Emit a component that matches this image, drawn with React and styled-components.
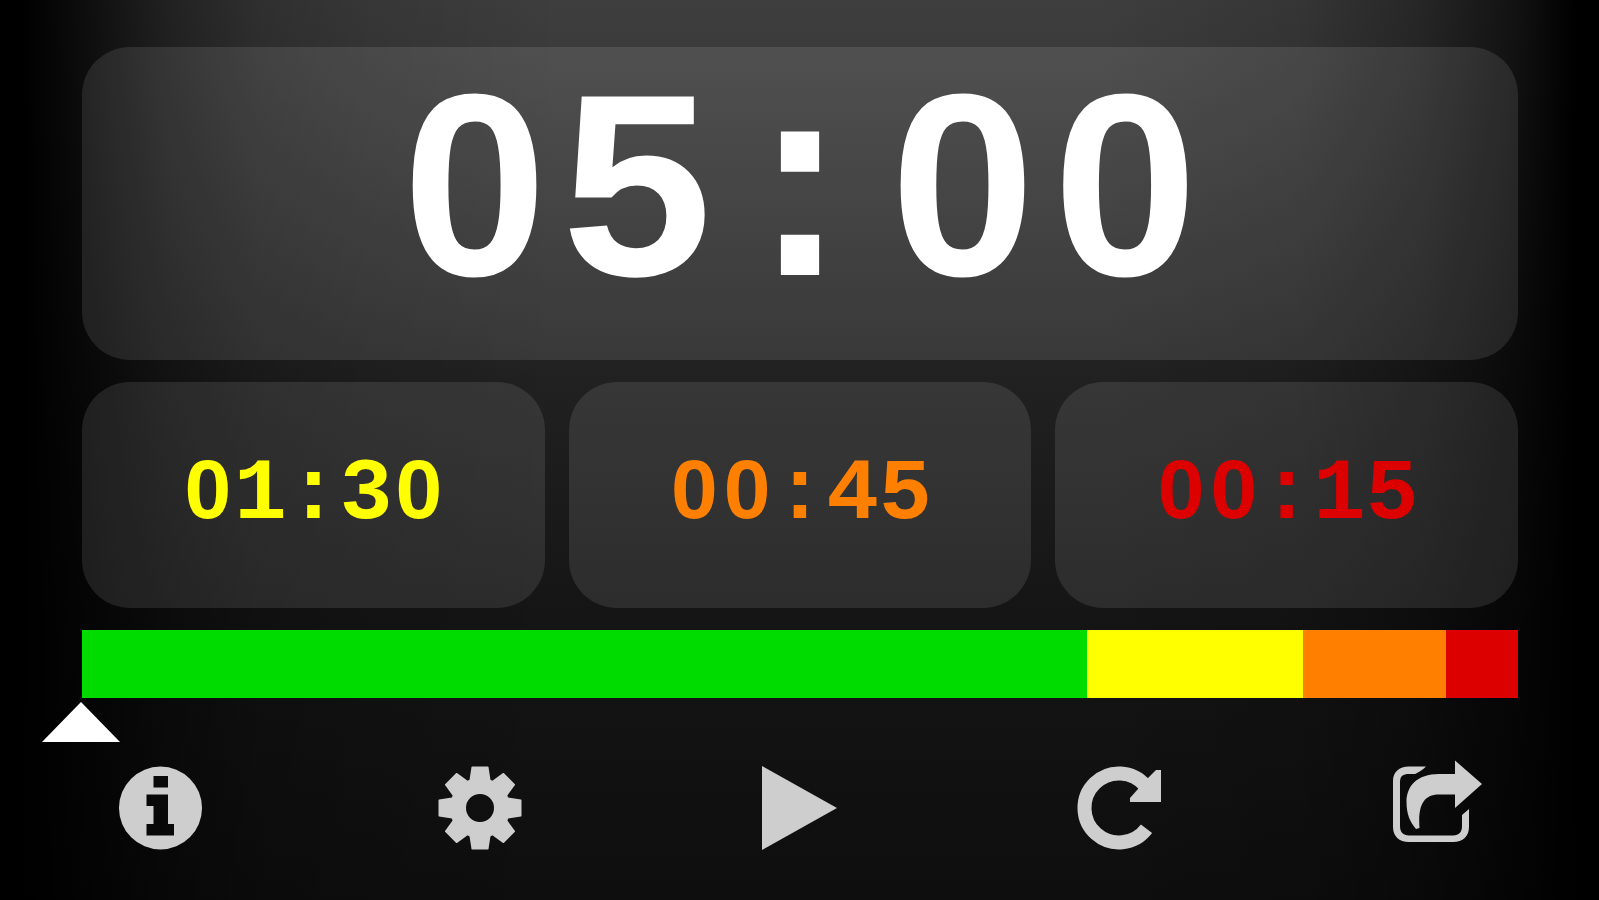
import React, { useState, useEffect } from "react";
import styled, { createGlobalStyle } from "styled-components";

const GlobalStyle = createGlobalStyle`
  * {
    box-sizing: border-box;
  }

  body {
    margin: 0;
    background-color: #000;
  }
`;

const Page = styled.main`
  min-height: 100vh;
  padding-top: 47px;
  font-family: "Liberation Mono", "Courier New", monospace;
  font-weight: bold;
  background:
    linear-gradient(
      to right,
      #000 0,
      #000 24px,
      rgba(0, 0, 0, 0.8) 80px,
      rgba(0, 0, 0, 0.46) 170px,
      rgba(0, 0, 0, 0.24) 260px,
      rgba(0, 0, 0, 0.12) 370px,
      rgba(0, 0, 0, 0) 560px,
      rgba(0, 0, 0, 0) calc(100% - 500px),
      rgba(0, 0, 0, 0.14) calc(100% - 300px),
      rgba(0, 0, 0, 0.38) calc(100% - 180px),
      rgba(0, 0, 0, 0.72) calc(100% - 80px),
      #000 calc(100% - 24px),
      #000 100%
    ),
    linear-gradient(to bottom, #3e3e3e 0, #3a3a3a 8%, #333 18%, #212121 42%, #151515 68%, #0e0e0e 100%);
`;

const Board = styled.div`
  display: flex;
  flex-direction: column;
  gap: 22px;
  padding: 0 81px 0 82px;
`;

const Panel = styled.section`
  display: flex;
  align-items: center;
  justify-content: center;
  padding-bottom: 2px;
  border-radius: 48px;
  background-color: rgba(255, 255, 255, 0.1);
`;

const MainPanel = styled(Panel)`
  height: 313px;
  color: #fff;
  font-size: 271px;
`;

const Limits = styled.div`
  display: grid;
  grid-template-columns: repeat(3, 1fr);
  gap: 24px;
`;

const LimitPanel = styled(Panel)`
  height: 226px;
  color: ${(props) => props.$color};
  font-size: 88px;
`;

// Liberation Mono has a dotted zero, the sans one is plain
const Zero = styled.span`
  padding: 0 ${(props) => (props.$large ? 9 : 3)}px;
  font-family: "Liberation Sans", Arial, sans-serif;
  font-size: ${(props) => (props.$large ? 260 : 84)}px;
  line-height: 0;
`;

const Bar = styled.div`
  display: flex;
  height: 68px;
`;

const Segment = styled.div`
  flex: ${(props) => props.$seconds} 0 0;
  background-color: ${(props) => props.$color};
`;

const MarkerTrack = styled.div`
  padding: 4px 81px 0;
`;

const Marker = styled.div`
  width: 78px;
  height: 40px;
  transform: translateX(-50%);
  background-color: #fff;
  clip-path: polygon(50% 0, 100% 100%, 0 100%);
`;

const Toolbar = styled.nav`
  display: grid;
  grid-template-columns: repeat(5, 1fr);
  justify-items: center;
  padding-top: 16px;
`;

const IconButton = styled.button`
  display: block;
  padding: 0;
  border: none;
  background: none;
  color: #cecece;
  cursor: pointer;
`;

const IconSvg = styled.svg`
  display: block;
  width: 100px;
  height: 100px;
  fill: currentColor;
`;

const Icon = ({ children }) => (
  <IconSvg viewBox="-8 -8 100 100" aria-hidden="true">
    {children}
  </IconSvg>
);

const InfoIcon = () => (
  <Icon>
    <path
      fillRule="evenodd"
      d="M42.5 .5a41.500 41.500 0 1 1 0 83a41.500 41.500 0 1 1 0-83zM35.500 10v11.500h14.500v-11.500zM28.500 28.500v11.500h7v18h-7v11.500h27.500v-11.500h-6V28.500z"
    />
  </Icon>
);

const GearIcon = () => (
  <Icon>
    <circle cx="42" cy="42" r="22" fill="none" stroke="currentColor" strokeWidth="16" />
    {[0, 45, 90, 135, 180, 225, 270, 315].map((angle) => (
      <path key={angle} d="M31.5 14L33.5 1q0-.5 1-.5h15q1 0 1 .5l2 13z" transform={`rotate(${angle} 42 42)`} />
    ))}
  </Icon>
);

const PlayIcon = () => (
  <Icon>
    <path d="M5 0L80 42L5 84z" />
  </Icon>
);

const PauseIcon = () => (
  <Icon>
    <path d="M8 4h26v76H8zM50 4h26v76H50z" />
  </Icon>
);

const ResetIcon = () => (
  <Icon>
    <path
      d="M69.5 62.8A34.5 34.5 0 1 1 68.4 19.8"
      fill="none"
      stroke="currentColor"
      strokeWidth="14"
    />
    <path d="M84 4v32H53V32L61 23L71 12L79 4z" />
  </Icon>
);

const ShareIcon = () => (
  <Icon>
    <path d="M29 .5H12C2 .5-4 6-4 15V61C-4 70 2 76 12 76H56C66 76 72 70 72 61V43L65 49V60C65 66 62 69.500 56 69.500H12C6 69.500 3 66 3 60V16C3 10 6 8 12 8H18C22 6 26 4 29 .5z" />
    <path d="M58-5.500L85 18L58 42V28.500H42C25 28.500 21 42 22.500 62L19 63C13 56 9.500 48 9.500 36C9.500 20 20 8 42 8H58z" />
  </Icon>
);

const TOTAL = 300;

const limits = [
  { name: "Yellow", seconds: 90, color: "#ffff00" },
  { name: "Orange", seconds: 45, color: "#ff8000" },
  { name: "Red", seconds: 15, color: "#dc0000" },
];

const segments = [
  { seconds: 210, color: "#00dc00" },
  { seconds: 45, color: "#ffff00" },
  { seconds: 30, color: "#ff8000" },
  { seconds: 15, color: "#dc0000" },
];

const formatTime = (seconds) => {
  const minutes = String(Math.floor(seconds / 60)).padStart(2, "0");
  const rest = String(seconds % 60).padStart(2, "0");
  return `${minutes}:${rest}`;
};

const Time = ({ seconds, large, role }) => (
  <time role={role}>
    {formatTime(seconds)
      .split("")
      .map((char, index) =>
        char === "0" ? (
          <Zero key={index} $large={large}>
            0
          </Zero>
        ) : (
          char
        )
      )}
  </time>
);

const App = () => {
  const [remaining, setRemaining] = useState(TOTAL);
  const [isRunning, setIsRunning] = useState(false);

  useEffect(() => {
    if (!isRunning) return;
    const timer = setInterval(() => {
      setRemaining((value) => Math.max(value - 1, 0));
    }, 1000);

    return () => clearInterval(timer);
  }, [isRunning]);

  const handleReset = () => {
    setIsRunning(false);
    setRemaining(TOTAL);
  };

  return (
    <>
      <GlobalStyle />
      <Page>
        <Board>
          <MainPanel>
            <Time seconds={remaining} role="timer" large />
          </MainPanel>
          <Limits>
            {limits.map((limit) => (
              <LimitPanel key={limit.name} $color={limit.color} aria-label={limit.name}>
                <Time seconds={limit.seconds} />
              </LimitPanel>
            ))}
          </Limits>
          <Bar>
            {segments.map((segment) => (
              <Segment key={segment.color} $seconds={segment.seconds} $color={segment.color} />
            ))}
          </Bar>
        </Board>
        <MarkerTrack>
          <Marker style={{ marginLeft: `${((TOTAL - remaining) / TOTAL) * 100}%` }} />
        </MarkerTrack>
        <Toolbar>
          <IconButton type="button" aria-label="Info">
            <InfoIcon />
          </IconButton>
          <IconButton type="button" aria-label="Settings">
            <GearIcon />
          </IconButton>
          <IconButton
            type="button"
            aria-label={isRunning ? "Pause" : "Start"}
            onClick={() => setIsRunning(!isRunning)}
          >
            {isRunning ? <PauseIcon /> : <PlayIcon />}
          </IconButton>
          <IconButton type="button" aria-label="Reset" onClick={handleReset}>
            <ResetIcon />
          </IconButton>
          <IconButton type="button" aria-label="Share">
            <ShareIcon />
          </IconButton>
        </Toolbar>
      </Page>
    </>
  );
};

export default App;
